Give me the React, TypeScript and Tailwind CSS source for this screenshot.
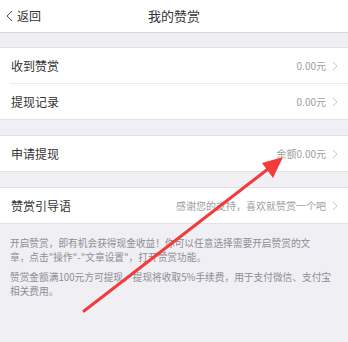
import React from 'react';

const font = { fontFamily: '"Noto Sans CJK SC", "Noto Sans", sans-serif' };

const Chevron = () => (
  <svg width="6" height="10" viewBox="0 0 6 10" className="ml-[6px] shrink-0">
    <path d="M1 1 L5 5 L1 9" fill="none" stroke="#c7c7cc" strokeWidth="1" />
  </svg>
);

const Row = ({ label, value }: { label: string; value: string }) => (
  <div className="flex h-[35px] items-center justify-between pl-[11px] pr-[10px]">
    <span className="text-[12px] text-[#333]">{label}</span>
    <div className="flex items-center">
      <span className="text-[10px] text-[#a0a0a0]">{value}</span>
      <Chevron />
    </div>
  </div>
);

export default function App() {
  return (
    <div className="relative h-[342px] w-[348px] overflow-hidden bg-[#efeff4]" style={font}>
      {/* header */}
      <div className="relative flex h-[33px] items-center border-b border-[#d6d6da] bg-white">
        <div className="flex items-center pl-[6px]">
          <svg width="7" height="12" viewBox="0 0 7 12">
            <path d="M6 1 L1 6 L6 11" fill="none" stroke="#555" strokeWidth="1" />
          </svg>
          <span className="ml-[4px] text-[12px] text-[#333]">返回</span>
        </div>
        <span className="absolute left-1/2 -translate-x-1/2 text-[13px] text-[#333]">我的赞赏</span>
      </div>

      <div className="h-[14px]" />

      <div className="border-y border-[#e2e2e6] bg-white">
        <Row label="收到赞赏" value="0.00元" />
        <div className="ml-[10px] border-t border-[#ececec]" />
        <Row label="提现记录" value="0.00元" />
      </div>

      <div className="h-[15px]" />

      <div className="border-y border-[#e2e2e6] bg-white">
        <Row label="申请提现" value="余额0.00元" />
      </div>

      <div className="h-[15px]" />

      <div className="border-y border-[#e2e2e6] bg-white">
        <Row label="赞赏引导语" value="感谢您的支持，喜欢就赞赏一个吧" />
      </div>

      <div className="pl-[10px] pr-[14px] pt-[12px] text-[9.7px] leading-[14px] text-[#8e8e93]">
        <p>
          开启赞赏，即有机会获得现金收益！你可以任意选择需要开启赞赏的文
          <br />
          章，点击"操作"-"文章设置"，打开赞赏功能。
        </p>
        <p className="mt-[6px]">赞赏金额满100元方可提现，提现将收取5%手续费，用于支付微信、支付宝相关费用。</p>
      </div>

      {/* red annotation arrow */}
      <svg className="pointer-events-none absolute left-0 top-0" width="348" height="342" viewBox="0 0 348 342">
        <line x1="84" y1="311" x2="268" y2="169" stroke="#f23c3c" strokeWidth="3" strokeLinecap="round" />
        <polygon points="283,157 262,163 273,178" fill="#f23c3c" />
      </svg>
    </div>
  );
}
